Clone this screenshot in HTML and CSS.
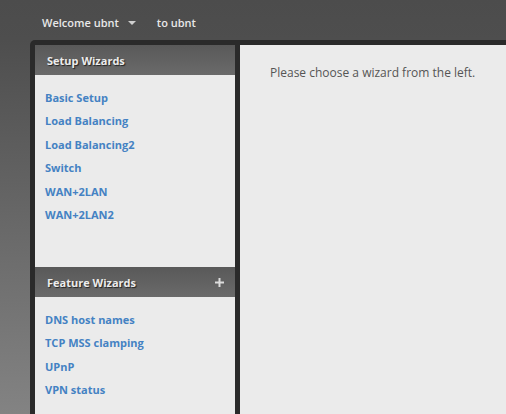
FILE: index.html
```html
<!DOCTYPE html>
<html>
<head>
<meta charset="utf-8">
<link rel="stylesheet" href="styles.css">
</head>
<body>
<div class="topbar">
  <span class="welcome">Welcome ubnt</span>
  <span class="caret"></span>
  <span class="to">to ubnt</span>
</div>
<div class="frame">
  <div class="sidebar">
    <div class="head">Setup Wizards</div>
    <ul class="links setup">
      <li><a>Basic Setup</a></li>
      <li><a>Load Balancing</a></li>
      <li><a>Load Balancing2</a></li>
      <li><a>Switch</a></li>
      <li><a>WAN+2LAN</a></li>
      <li><a>WAN+2LAN2</a></li>
    </ul>
    <div class="head">Feature Wizards
      <svg class="plus" width="9" height="9" viewBox="0 0 9 9"><rect x="3.5" y="0" width="2" height="9" fill="#dcdcdc"/><rect x="0" y="3.5" width="9" height="2" fill="#dcdcdc"/></svg>
    </div>
    <ul class="links">
      <li><a>DNS host names</a></li>
      <li><a>TCP MSS clamping</a></li>
      <li><a>UPnP</a></li>
      <li><a>VPN status</a></li>
    </ul>
  </div>
  <div class="main">
    <p class="msg">Please choose a wizard from the left.</p>
  </div>
</div>
</body>
</html>
```
FILE: styles.css
```css
html, body {
  margin: 0;
  padding: 0;
  height: 414px;
  overflow: hidden;
}
body {
  background: linear-gradient(to bottom, #4c4c4c 0px, #4e4e4e 40px, #838383 414px);
  font-family: "Open Sans", "Liberation Sans", sans-serif;
}
.topbar {
  height: 40px;
  display: flex;
  align-items: center;
  padding-left: 42px;
  box-sizing: border-box;
  padding-top: 5px;
  color: #e8e8e8;
  font-size: 11px;
  font-weight: 600;
}
.caret {
  width: 0;
  height: 0;
  border-left: 4px solid transparent;
  border-right: 4px solid transparent;
  border-top: 4px solid #cfcfcf;
  margin-left: 9px;
  margin-top: 1px;
}
.to {
  margin-left: 21px;
}
.frame {
  margin-left: 30px;
  background: #2a2a2a;
  border-top-left-radius: 5px;
  padding: 5px 0 0 5px;
  display: flex;
  gap: 5px;
  height: 369px;
  overflow: hidden;
}
.sidebar {
  width: 200px;
  background: #ebebeb;
}
.head {
  height: 30px;
  background: linear-gradient(to bottom, #595959, #6a6a6a);
  color: #ececec;
  font-size: 11px;
  font-weight: 700;
  text-shadow: 1px 1px 1px #222;
  display: flex;
  align-items: center;
  justify-content: space-between;
  padding: 0 11px 0 12px;
}
.plus {
  display: block;
}
.links {
  list-style: none;
  margin: 0;
  padding: 11px 0 0 10px;
}
.links.setup {
  height: 181px;
}
.links li {
  line-height: 23.4px;
  font-size: 11px;
  font-weight: 700;
}
.links a {
  color: #4482c3;
}
.main {
  flex: 1;
  background: #ebebeb;
}
.msg {
  margin: 0;
  padding: 20px 0 0 30px;
  font-size: 12px;
  line-height: 16px;
  color: #555;
}
```
